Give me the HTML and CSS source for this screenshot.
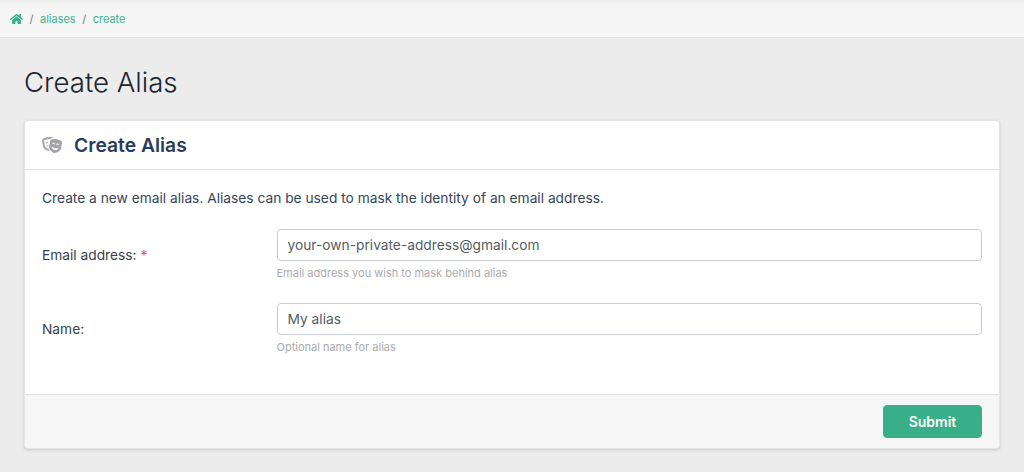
FILE: index.html
```html
<!DOCTYPE html>
<html lang="en">
<head>
<meta charset="utf-8">
<title>Create Alias</title>
<link rel="stylesheet" href="styles.css">
</head>
<body>
<nav class="crumbs">
  <a class="crumb-home" href="#"><svg class="home-icon" viewBox="0 0 576 512"><path d="M280.4 148.3L96 300.1V464a16 16 0 0 0 16 16l112-.3a16 16 0 0 0 15.9-16V368a16 16 0 0 1 16-16h64a16 16 0 0 1 16 16v95.6a16 16 0 0 0 16 16.1l112 .3a16 16 0 0 0 16-16V300L295.7 148.3a12.2 12.2 0 0 0-15.3 0zM571.6 251.5L488 182.6V44a12 12 0 0 0-12-12h-56a12 12 0 0 0-12 12v72.6L318.5 43a48 48 0 0 0-61 0L4.3 251.5a12 12 0 0 0-1.6 16.9l25.5 31A12 12 0 0 0 45.2 301l235.2-193.7a12.2 12.2 0 0 1 15.3 0L530.9 301a12 12 0 0 0 16.9-1.6l25.5-31a12 12 0 0 0-1.7-16.9z"/></svg></a>
  <span class="sep">/</span><a href="#">aliases</a><span class="sep">/</span><a href="#">create</a>
</nav>
<main class="page">
  <h1 class="page-title">Create Alias</h1>
  <form class="card">
    <header class="card-head">
      <svg class="mask-icon" viewBox="0 0 640 512"><path d="M206.86 245.15c-35.88 10.45-59.95 41.2-57.53 74.1 11.4-12.72 28.81-23.7 49.9-30.92l7.63-43.18zM95.81 295L64.08 115.49c-.29-1.62.28-2.62.24-2.65 57.76-32.06 123.12-49.01 189.01-49.01 1.61 0 3.23.17 4.85.19 13.95-13.47 31.73-22.83 51.59-26 18.89-3.02 38.05-4.55 57.18-5.32-9.99-13.95-24.48-24.23-41.77-27C301.27 1.89 277.24 0 253.32 0 176.66 0 101.02 19.42 33.2 57.06 9.03 70.48-3.92 98.48 1.05 126.58l31.73 179.51c14.23 80.52 136.33 142.08 204.45 142.08 3.59 0 6.75-.46 10.01-.8-13.52-17.08-28.94-40.48-39.5-67.58-47.61-12.98-106.06-51.62-111.93-84.79zm97.55-137.46c-.73-4.12-2.23-7.87-4.07-11.4-8.25 8.91-20.67 15.75-35.32 18.32-14.65 2.58-28.67.4-39.48-5.17-.52 3.94-.64 7.98.09 12.1 3.84 21.7 24.58 36.19 46.34 32.37 21.75-3.82 36.28-24.52 32.44-46.22zM606.8 120.9c-88.98-49.38-191.43-67.41-291.98-51.35-27.31 4.36-49.08 26.26-54.04 54.36l-31.73 179.51c-15.39 87.05 95.28 196.27 158.31 207.35 63.03 11.09 204.47-53.79 219.86-140.84l31.73-179.51c4.97-28.11-7.98-56.11-32.15-69.52zm-273.24 96.8c3.84-21.7 24.58-36.19 46.34-32.36 21.76 3.83 36.28 24.52 32.45 46.22-.73 4.12-2.23 7.87-4.07 11.4-8.25-8.91-20.67-15.75-35.32-18.32-14.65-2.58-28.67-.4-39.48 5.17-.53-3.95-.65-7.99.08-12.11zm70.47 198.76c-55.68-9.79-93.52-59.27-89.04-112.9 20.6 25.54 56.21 46.17 99.49 53.78 43.28 7.61 83.82.37 111.93-16.6-14.18 51.94-66.71 85.51-122.38 75.72zm130.3-151.34c-8.25-8.91-20.68-15.75-35.33-18.32-14.65-2.58-28.67-.4-39.48 5.17-3.84-21.7 10.69-42.4 32.45-46.22 21.76-3.83 42.5 10.66 46.34 32.36.73 4.12.61 8.16.08 12.11-1.92-3.53-2.31-7.28-4.06-11.1z"/></svg>
      <h2 class="card-title">Create Alias</h2>
    </header>
    <div class="card-body">
      <p class="intro">Create a new email alias. Aliases can be used to mask the identity of an email address.</p>
      <div class="row">
        <label class="label" for="email">Email address: <span class="req">*</span></label>
        <div class="field">
          <input class="input" id="email" type="text" value="your-own-private-address@gmail.com">
          <small class="hint">Email address you wish to mask behind alias</small>
        </div>
      </div>
      <div class="row">
        <label class="label" for="name">Name:</label>
        <div class="field">
          <input class="input" id="name" type="text" value="My alias">
          <small class="hint">Optional name for alias</small>
        </div>
      </div>
    </div>
    <footer class="card-foot">
      <button class="submit" type="button">Submit</button>
    </footer>
  </form>
</main>
</body>
</html>
```
FILE: styles.css
```css
* { box-sizing: border-box; }
html, body { margin: 0; padding: 0; }
body {
  height: 472px;
  overflow: hidden;
  background: #edecec;
  color: #1f2d3d;
  font-family: Inter, "Liberation Sans", sans-serif;
  font-size: 13.75px;
}
a { color: #41b28e; text-decoration: none; }
.crumbs {
  height: 38px;
  display: flex;
  align-items: center;
  padding: 0 10px;
  font-size: 11px;
  background: linear-gradient(#e9e9e9, #f5f5f5 4px);
  border-bottom: 1px solid #e2e2e2;
}
.crumb-home { display: flex; }
.home-icon { width: 13px; height: 12px; fill: #38af88; }
.sep { color: #6c757d; margin: 0 6.5px; }
.page { padding: 0 24px; }
.page-title {
  margin: 0;
  padding-top: 27px;
  height: 82px;
  font-size: 27.6px;
  line-height: 34px;
  font-weight: 300;
  color: #1b2430;
}
.card {
  background: #fff;
  border: 1px solid #e6e5e5;
  border-radius: 4px;
  box-shadow: 0 1px 3px rgba(0,0,0,.16);
  width: 976px;
}
.card-head {
  height: 49px;
  display: flex;
  align-items: center;
  padding: 0 17px;
  border-bottom: 1px solid #e3e3e3;
}
.mask-icon { width: 20px; height: 16px; fill: #a3a5a8; margin-right: 12px; }
.card-title { margin: 0; font-size: 19.3px; font-weight: 600; color: #2a3c5c; }
.card-body { height: 224px; padding: 20px 17px 0; }
.intro { margin: 0 0 22px; line-height: 17px; color: #36445a; }
.row { display: flex; margin-bottom: 23px; }
.label { width: 234.5px; height: 32px; margin-top: 10px; line-height: 32px; color: #373d4a; }
.req { color: #e8506c; }
.field { flex: 1; display: flex; flex-direction: column; }
.input {
  height: 32px;
  padding: 0 10px;
  border: 1px solid #c9cdd1;
  border-radius: 4px;
  background: #fff;
  color: #565c64;
  font: 13.75px Inter, "Liberation Sans", sans-serif;
}
.hint { margin-top: 5px; font-size: 11px; line-height: 14px; color: #a9abad; }
.card-foot {
  height: 54px;
  display: flex;
  justify-content: flex-end;
  align-items: center;
  padding: 0 17px;
  background: #f6f6f6;
  border-top: 1px solid #dedede;
  border-radius: 0 0 4px 4px;
}
.submit {
  width: 99px;
  height: 33px;
  border: 1px solid #38af88;
  border-radius: 4px;
  background: #38af88;
  color: #fff;
  font: 600 14px Inter, "Liberation Sans", sans-serif;
}
```
